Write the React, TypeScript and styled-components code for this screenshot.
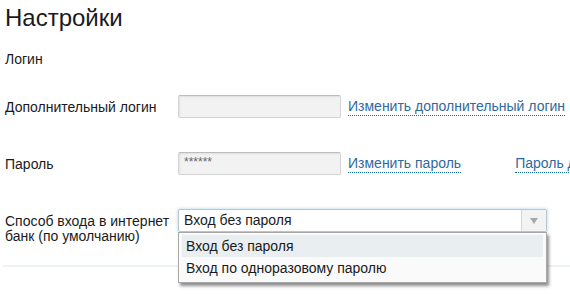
import React, { useState } from 'react'
import styled, { createGlobalStyle } from 'styled-components'

const GlobalStyle = createGlobalStyle`
    body {
        margin: 0;
        background: #fff;
        font-family: "Liberation Sans", Arial, sans-serif;
        color: #1a1a1a;
    }
`

const PageStyle = styled.div`
    width: 570px;
    height: 294px;
    overflow: hidden;
    padding: 3px 0 0 5px;
    box-sizing: border-box;
    white-space: nowrap;
`

const TitleStyle = styled.h1`
    margin: 0;
    font-size: 24px;
    line-height: 30px;
    font-weight: normal;
`

const SectionStyle = styled.div`
    margin-top: 16px;
    font-size: 14px;
    line-height: 20px;
`

const RowStyle = styled.div<{ $top: number }>`
    display: grid;
    grid-template-columns: 173px 170px auto;
    align-items: center;
    margin-top: ${(p) => p.$top}px;
    font-size: 14px;
`

const SelectRowStyle = styled.div`
    display: grid;
    grid-template-columns: 173px 369px;
    align-items: start;
    margin-top: 34px;
    padding-bottom: 21px;
    margin-left: -2px;
    padding-left: 2px;
    border-bottom: 2px solid #edf2f5;
    font-size: 14px;
`

const LabelStyle = styled.div<{ $multi?: boolean }>`
    line-height: ${(p) => (p.$multi ? '15px' : '20px')};
    white-space: ${(p) => (p.$multi ? 'normal' : 'nowrap')};
    padding-top: ${(p) => (p.$multi ? '5px' : '0')};
`

const InputStyle = styled.div`
    width: 163px;
    height: 23px;
    box-sizing: border-box;
    border: 1px solid #d4d4d4;
    border-top-color: #bcbcbc;
    border-radius: 2px;
    background: #f2f2f2;
    box-shadow: inset 1px 1px 2px rgba(0, 0, 0, 0.08);
    color: #666;
    font-size: 12px;
    line-height: 14px;
    padding: 2px 5px;
`

const LinksStyle = styled.div`
    display: flex;
    gap: 54px;
`

const LinkStyle = styled.a`
    color: #2e6a9e;
    text-decoration: none;
    border-bottom: 1px dotted #0f6d9a;
    line-height: 17px;
    cursor: pointer;
`

const SelectWrapStyle = styled.div`
    position: relative;
`

const SelectStyle = styled.div`
    display: flex;
    height: 23px;
    box-sizing: border-box;
    border: 1px solid #b9c6cc;
    border-radius: 2px;
    background: #fff;
    box-shadow: 0 0 3px 1px #cde6f3;
    cursor: pointer;
`

const SelectValueStyle = styled.div`
    flex: 1;
    padding-left: 5px;
    line-height: 21px;
`

const ArrowBoxStyle = styled.div`
    width: 24px;
    border-left: 1px solid #d6d6d6;
    background: #f3f3f3;
    display: flex;
    align-items: center;
    justify-content: center;
`

const ArrowStyle = styled.span`
    width: 0;
    height: 0;
    border-left: 4px solid transparent;
    border-right: 4px solid transparent;
    border-top: 6px solid #a8a8a8;
`

const MenuStyle = styled.div`
    position: absolute;
    top: 23px;
    left: 0;
    right: 0;
    box-sizing: border-box;
    border: 1px solid #a8a8a8;
    background: #fafafa;
    padding: 2px 3px 3px;
    box-shadow: 2px 3px 3px rgba(0, 0, 0, 0.45);
    z-index: 2;
`

const OptionStyle = styled.div<{ $active?: boolean }>`
    height: 22px;
    line-height: 22px;
    padding-left: 4px;
    background: ${(p) => (p.$active ? '#e9eef0' : 'transparent')};
    cursor: pointer;
`

const options = ['Вход без пароля', 'Вход по одноразовому паролю']

const App = () => {
    const [value, setValue] = useState(options[0])
    const [isOpened, setIsOpened] = useState(true)

    return (
        <PageStyle>
            <GlobalStyle />
            <TitleStyle>Настройки</TitleStyle>
            <SectionStyle>Логин</SectionStyle>
            <RowStyle $top={26}>
                <LabelStyle>Дополнительный логин</LabelStyle>
                <InputStyle />
                <LinksStyle>
                    <LinkStyle>Изменить дополнительный логин</LinkStyle>
                </LinksStyle>
            </RowStyle>
            <RowStyle $top={34}>
                <LabelStyle>Пароль</LabelStyle>
                <InputStyle>******</InputStyle>
                <LinksStyle>
                    <LinkStyle>Изменить пароль</LinkStyle>
                    <LinkStyle>Пароль для входа</LinkStyle>
                </LinksStyle>
            </RowStyle>
            <SelectRowStyle>
                <LabelStyle $multi>
                    Способ входа в интернет
                    <br />
                    банк (по умолчанию)
                </LabelStyle>
                <SelectWrapStyle>
                    <SelectStyle onClick={() => setIsOpened(!isOpened)}>
                        <SelectValueStyle>{value}</SelectValueStyle>
                        <ArrowBoxStyle>
                            <ArrowStyle />
                        </ArrowBoxStyle>
                    </SelectStyle>
                    {isOpened && (
                        <MenuStyle>
                            {options.map((o) => (
                                <OptionStyle
                                    key={o}
                                    $active={o === value}
                                    onClick={() => setValue(o)}
                                >
                                    {o}
                                </OptionStyle>
                            ))}
                        </MenuStyle>
                    )}
                </SelectWrapStyle>
            </SelectRowStyle>
        </PageStyle>
    )
}

export default App
